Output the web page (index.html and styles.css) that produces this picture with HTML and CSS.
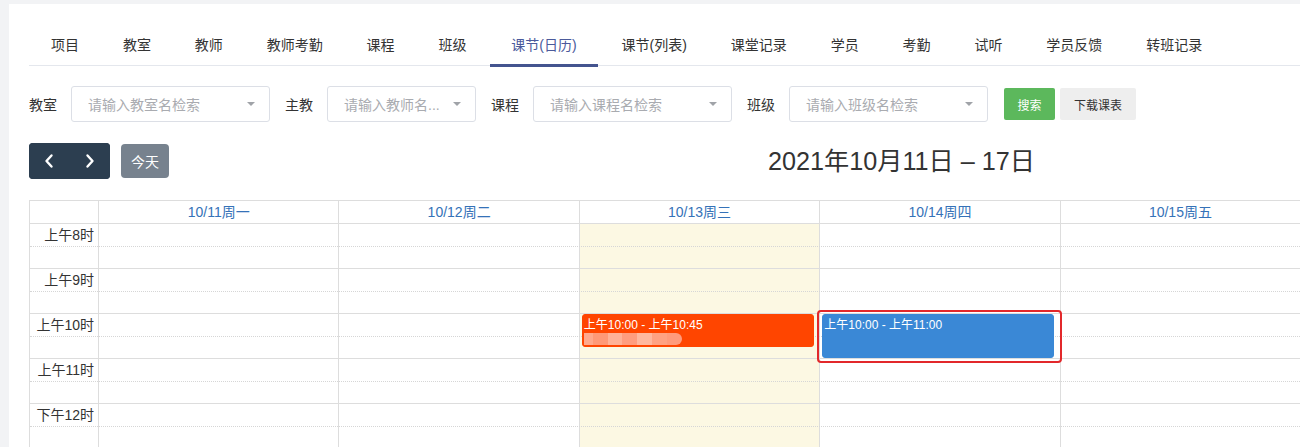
FILE: index.html
```html
<!DOCTYPE html>
<html lang="zh-CN">
<head>
<meta charset="utf-8">
<title>课节(日历)</title>
<link rel="stylesheet" href="styles.css">
</head>
<body>
<div class="page">
  <div class="card">
    <nav class="tabs">
      <a class="tab">项目</a>
      <a class="tab">教室</a>
      <a class="tab">教师</a>
      <a class="tab">教师考勤</a>
      <a class="tab">课程</a>
      <a class="tab">班级</a>
      <a class="tab active">课节(日历)</a>
      <a class="tab">课节(列表)</a>
      <a class="tab">课堂记录</a>
      <a class="tab">学员</a>
      <a class="tab">考勤</a>
      <a class="tab">试听</a>
      <a class="tab">学员反馈</a>
      <a class="tab">转班记录</a>
    </nav>

    <div class="filters">
      <label class="flabel">教室</label>
      <div class="select w200"><span class="ph">请输入教室名检索</span><i class="caret"></i></div>
      <label class="flabel">主教</label>
      <div class="select w150"><span class="ph">请输入教师名...</span><i class="caret"></i></div>
      <label class="flabel">课程</label>
      <div class="select w200"><span class="ph">请输入课程名检索</span><i class="caret"></i></div>
      <label class="flabel">班级</label>
      <div class="select w200"><span class="ph">请输入班级名检索</span><i class="caret"></i></div>
      <button class="btn btn-green">搜索</button>
      <button class="btn btn-light">下载课表</button>
    </div>

    <div class="calendar">
      <div class="toolbar">
        <div class="tb-left">
          <div class="btn-group">
            <button class="nav-btn" aria-label="prev">
              <svg width="10" height="16" viewBox="0 0 10 16"><polyline points="7.5,2.5 2.5,8 7.5,13.5" fill="none" stroke="#fff" stroke-width="2.4" stroke-linecap="round" stroke-linejoin="round"/></svg>
            </button>
            <button class="nav-btn" aria-label="next">
              <svg width="10" height="16" viewBox="0 0 10 16"><polyline points="2.5,2.5 7.5,8 2.5,13.5" fill="none" stroke="#fff" stroke-width="2.4" stroke-linecap="round" stroke-linejoin="round"/></svg>
            </button>
          </div>
          <button class="today-btn">今天</button>
        </div>
        <h2 class="title">2021年10月11日 – 17日</h2>
        <div class="tb-right"></div>
      </div>

      <div class="grid">
        <div class="head">
          <div class="hcell axis"></div>
          <div class="hcell">10/11周一</div>
          <div class="hcell">10/12周二</div>
          <div class="hcell">10/13周三</div>
          <div class="hcell">10/14周四</div>
          <div class="hcell">10/15周五</div>
          <div class="hcell">10/16周六</div>
          <div class="hcell">10/17周日</div>
        </div>

        <div class="body">
          <div class="bgcols">
            <div class="bgcol axis"></div>
            <div class="bgcol"></div>
            <div class="bgcol"></div>
            <div class="bgcol today"></div>
            <div class="bgcol"></div>
            <div class="bgcol"></div>
            <div class="bgcol"></div>
            <div class="bgcol"></div>
          </div>

          <div class="slots">
            <div class="slot major"><div class="label">上午8时</div></div>
            <div class="slot minor"><div class="label"></div></div>
            <div class="slot major"><div class="label">上午9时</div></div>
            <div class="slot minor"><div class="label"></div></div>
            <div class="slot major"><div class="label">上午10时</div></div>
            <div class="slot minor"><div class="label"></div></div>
            <div class="slot major"><div class="label">上午11时</div></div>
            <div class="slot minor"><div class="label"></div></div>
            <div class="slot major"><div class="label">下午12时</div></div>
            <div class="slot minor"><div class="label"></div></div>
            <div class="slot major"><div class="label">下午1时</div></div>
            <div class="slot minor"><div class="label"></div></div>
            <div class="slot major"><div class="label">下午2时</div></div>
            <div class="slot minor"><div class="label"></div></div>
          </div>

          <div class="evcols">
            <div class="evcol axis"></div>
            <div class="evcol"></div>
            <div class="evcol"></div>
            <div class="evcol">
              <div class="event ev-orange" style="top:90px;height:33px;">
                <div class="ev-time">上午10:00 - 上午10:45</div>
                <div class="ev-blur"><span class="b1"></span><span class="b2"></span><span class="b3"></span><span class="b4"></span><span class="b5"></span><span class="b6"></span><span class="b7"></span></div>
              </div>
            </div>
            <div class="evcol">
              <div class="event ev-blue marked" style="top:90px;height:44px;">
                <div class="ev-time">上午10:00 - 上午11:00</div>
              </div>
            </div>
            <div class="evcol"></div>
            <div class="evcol"></div>
            <div class="evcol"></div>
          </div>
        </div>
      </div>
    </div>
  </div>
</div>
</body>
</html>
```

FILE: styles.css
```css
* { box-sizing: border-box; }

html, body {
  margin: 0;
  padding: 0;
  overflow: hidden;
  background: #f2f3f5;
}

body {
  font-family: "Liberation Sans", "Noto Sans CJK SC", sans-serif;
  font-size: 14px;
  color: #333;
}

.page {
  padding: 4px 0 0 9px;
}

.card {
  background: #fff;
  width: 1800px;
  padding: 22px 20px 40px 20px;
  min-height: 460px;
}

/* Tabs */
.tabs {
  display: flex;
  height: 40px;
  border-bottom: 1px solid #e4e7ed;
  padding-left: 2px;
}

.tab {
  display: block;
  height: 40px;
  line-height: 38px;
  padding: 0 20px;
  margin-right: 3.9px;
  color: #333;
  font-size: 14px;
  white-space: nowrap;
  position: relative;
}

.tab.active {
  color: #4b5a9b;
  padding: 0 21px;
}

.tab.active::after {
  content: "";
  position: absolute;
  left: 0;
  right: 0;
  bottom: -1px;
  height: 3px;
  background: #44548f;
}

/* Filters */
.filters {
  display: flex;
  align-items: center;
  margin-top: 20px;
  height: 36px;
}

.flabel {
  font-size: 14px;
  color: #333;
  margin-right: 14px;
  white-space: nowrap;
}

.select {
  height: 36px;
  border: 1px solid #dcdfe6;
  border-radius: 3px;
  display: flex;
  align-items: center;
  padding: 0 14px 0 16px;
  margin-right: 15px;
  background: #fff;
}

.select.w200 { width: 199px; }
.select.w150 { width: 149px; }

.ph {
  flex: 1;
  color: #a9abb0;
  font-size: 14px;
  white-space: nowrap;
  overflow: hidden;
}

.caret {
  width: 0;
  height: 0;
  border-left: 4px solid transparent;
  border-right: 4px solid transparent;
  border-top: 4px solid #a0a3a8;
}

.btn {
  height: 32px;
  border: none;
  border-radius: 2px;
  font-family: inherit;
  font-size: 12px;
  padding: 0 14px;
  cursor: pointer;
}

.btn-green {
  background: #5cb85c;
  color: #fff;
  width: 51px;
  padding: 0;
  margin-left: 1px;
}

.btn-light {
  background: #eeeeee;
  color: #333;
  width: 76px;
  padding: 0;
  margin-left: 5px;
}

/* Calendar toolbar */
.calendar {
  width: 1753px;
  margin-top: 21px;
}

.toolbar {
  display: grid;
  grid-template-columns: 1fr auto 1fr;
  align-items: center;
  height: 36px;
  margin-bottom: 21px;
}

.tb-left {
  display: flex;
  align-items: center;
}

.btn-group {
  display: flex;
  width: 81px;
  height: 36px;
  border-radius: 4px;
  overflow: hidden;
  background: #2c3e50;
}

.nav-btn {
  flex: 1;
  border: none;
  background: #2c3e50;
  display: flex;
  align-items: center;
  justify-content: center;
  padding: 0;
}

.today-btn {
  margin-left: 11px;
  width: 48px;
  height: 34px;
  border: none;
  border-radius: 4px;
  background: #77828e;
  color: #fff;
  font-family: inherit;
  font-size: 14px;
  padding: 0;
}

.title {
  margin: 0;
  padding-right: 8px;
  font-size: 25.2px;
  font-weight: normal;
  color: #333;
  white-space: nowrap;
  line-height: 36px;
}

/* Grid */
.grid {
  border-left: 1px solid #ddd;
  border-top: 1px solid #ddd;
}

.head {
  display: grid;
  grid-template-columns: 69px repeat(7, 1fr);
  height: 23px;
  border-bottom: 1px solid #ddd;
}

.hcell {
  border-right: 1px solid #ddd;
  text-align: center;
  color: #3572b8;
  font-size: 14px;
  line-height: 22px;
  white-space: nowrap;
}

.hcell.axis { margin-left: -1px; }

.body {
  position: relative;
}

.bgcols,
.evcols {
  position: absolute;
  inset: 0;
  display: grid;
  grid-template-columns: 69px repeat(7, 1fr);
}

.bgcols { z-index: 0; }
.evcols { z-index: 2; pointer-events: none; }

.bgcol {
  border-right: 1px solid #ddd;
}

.bgcol.today {
  background: #fcf8e3;
}

.evcol {
  position: relative;
}

.slots {
  position: relative;
  z-index: 1;
}

.slot {
  height: 22.5px;
  display: grid;
  grid-template-columns: 69px 1fr;
}

.slot.major {
  border-bottom: 1px dotted #d6d6d6;
}

.slot.minor {
  border-bottom: 1px solid #ddd;
}

.slot .label {
  text-align: right;
  padding-right: 5px;
  font-size: 14px;
  color: #333;
  line-height: 22px;
  white-space: nowrap;
}

/* Events */
.event {
  position: absolute;
  border-radius: 3px;
  color: #fff;
  font-size: 12px;
  padding: 2px 1px;
  overflow: visible;
}

.ev-orange {
  left: 2px;
  right: 6px;
  background: #ff4500;
  border: 1px solid #ff4500;
}

.ev-blue {
  left: 2px;
  right: 7px;
  background: #3a88d6;
  border: 1px solid #3a88d6;
}

.ev-time {
  line-height: 16px;
  white-space: nowrap;
}

.ev-blur {
  display: flex;
  height: 12px;
  width: 98px;
  margin-top: 0;
  border-radius: 0 6px 6px 0;
  overflow: hidden;
}

.ev-blur span { flex: 1; }
.ev-blur .b1 { background: #ffa98c; flex: 0.6; }
.ev-blur .b2 { background: #ff9977; }
.ev-blur .b3 { background: #ffb297; }
.ev-blur .b4 { background: #ff9d7f; }
.ev-blur .b5 { background: #ffb89f; }
.ev-blur .b6 { background: #ffa283; }
.ev-blur .b7 { background: #ff9b7c; }

.marked::after {
  content: "";
  position: absolute;
  left: -6px;
  right: -9px;
  top: -5px;
  bottom: -6px;
  border: 2.5px solid #e2282b;
  border-radius: 4px;
}
```
